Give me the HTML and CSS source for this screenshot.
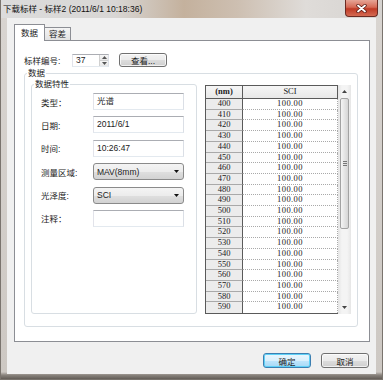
FILE: index.html
```html
<!DOCTYPE html>
<html lang="zh-CN">
<head>
  <meta charset="UTF-8">
  <title>下载标样</title>
  <link rel="stylesheet" href="styles.css">
</head>
<body>
  <div class="window">
    <div class="titlebar">
      <span class="title">下载标样 - 标样2 (2011/6/1 10:18:36)</span>
      <span class="close">
        <svg width="11" height="9" viewBox="0 0 11 9">
          <path d="M2 1.5 L9 7.5 M9 1.5 L2 7.5" stroke="#5a1a12" stroke-width="3.4" stroke-linecap="round"/>
          <path d="M2 1.5 L9 7.5 M9 1.5 L2 7.5" stroke="#ffffff" stroke-width="1.8" stroke-linecap="round"/>
        </svg>
      </span>
    </div>

    <div class="client">
      <div class="tabs">
        <div class="tab active">数据</div>
        <div class="tab">容差</div>
      </div>

      <div class="panel">
        <div class="id-row">
          <span class="id-label">标样编号:</span>
          <div class="spin">
            <span class="spin-value">37</span>
            <div class="spin-btns">
              <span class="spin-up"><svg width="5" height="3" viewBox="0 0 5 3"><path d="M0 3 L2.5 0 L5 3 Z" fill="#555"/></svg></span>
              <span class="spin-down"><svg width="5" height="3" viewBox="0 0 5 3"><path d="M0 0 L2.5 3 L5 0 Z" fill="#555"/></svg></span>
            </div>
          </div>
          <button class="button view-button">查看...</button>
        </div>

        <fieldset class="group outer">
          <legend>数据</legend>
          <div class="group-body">
            <fieldset class="group inner">
              <legend>数据特性</legend>
              <div class="fields">
                <div class="field">
                  <span class="field-label">类型：</span>
                  <div class="text-box">光谱</div>
                </div>
                <div class="field">
                  <span class="field-label">日期:</span>
                  <div class="text-box">2011/6/1</div>
                </div>
                <div class="field">
                  <span class="field-label">时间:</span>
                  <div class="text-box">10:26:47</div>
                </div>
                <div class="field">
                  <span class="field-label">测量区域:</span>
                  <div class="select-box">
                    <span>MAV(8mm)</span>
                    <svg width="5" height="3" viewBox="0 0 5 3"><path d="M0 0 L5 0 L2.5 3 Z" fill="#111"/></svg>
                  </div>
                </div>
                <div class="field">
                  <span class="field-label">光泽度:</span>
                  <div class="select-box">
                    <span>SCI</span>
                    <svg width="5" height="3" viewBox="0 0 5 3"><path d="M0 0 L5 0 L2.5 3 Z" fill="#111"/></svg>
                  </div>
                </div>
                <div class="field">
                  <span class="field-label">注释：</span>
                  <div class="text-box"></div>
                </div>
              </div>
            </fieldset>

            <div class="grid">
              <div class="sheet">
                <div class="head">
                  <div class="key">(nm)</div>
                  <div class="val">SCI</div>
                </div>
                <div class="rows">
                  <div class="row"><div class="key">400</div><div class="val">100.00</div></div>
                  <div class="row"><div class="key">410</div><div class="val">100.00</div></div>
                  <div class="row"><div class="key">420</div><div class="val">100.00</div></div>
                  <div class="row"><div class="key">430</div><div class="val">100.00</div></div>
                  <div class="row"><div class="key">440</div><div class="val">100.00</div></div>
                  <div class="row"><div class="key">450</div><div class="val">100.00</div></div>
                  <div class="row"><div class="key">460</div><div class="val">100.00</div></div>
                  <div class="row"><div class="key">470</div><div class="val">100.00</div></div>
                  <div class="row"><div class="key">480</div><div class="val">100.00</div></div>
                  <div class="row"><div class="key">490</div><div class="val">100.00</div></div>
                  <div class="row"><div class="key">500</div><div class="val">100.00</div></div>
                  <div class="row"><div class="key">510</div><div class="val">100.00</div></div>
                  <div class="row"><div class="key">520</div><div class="val">100.00</div></div>
                  <div class="row"><div class="key">530</div><div class="val">100.00</div></div>
                  <div class="row"><div class="key">540</div><div class="val">100.00</div></div>
                  <div class="row"><div class="key">550</div><div class="val">100.00</div></div>
                  <div class="row"><div class="key">560</div><div class="val">100.00</div></div>
                  <div class="row"><div class="key">570</div><div class="val">100.00</div></div>
                  <div class="row"><div class="key">580</div><div class="val">100.00</div></div>
                  <div class="row"><div class="key">590</div><div class="val">100.00</div></div>
                </div>
              </div>
              <div class="scrollbar">
                <div class="arrow"><svg width="5" height="3" viewBox="0 0 5 3"><path d="M0 3 L2.5 0 L5 3 Z" fill="#444"/></svg></div>
                <div class="thumb"><span class="grip"></span></div>
                <div class="track"></div>
                <div class="arrow"><svg width="5" height="3" viewBox="0 0 5 3"><path d="M0 0 L2.5 3 L5 0 Z" fill="#444"/></svg></div>
              </div>
            </div>
          </div>
        </fieldset>
      </div>

      <div class="actions">
        <button class="button default">确定</button>
        <button class="button">取消</button>
      </div>
    </div>
  </div>
</body>
</html>
```

FILE: styles.css
```css
* {
  box-sizing: border-box;
}

body {
  margin: 0;
  font-family: "Liberation Sans", "Noto Sans CJK SC", sans-serif;
  font-size: 8.5px;
  color: #1b1b1b;
  background: #cfcac5;
}

.window {
  width: 383px;
  height: 380px;
  display: flex;
  flex-direction: column;
  border: 1px solid #7a746e;
  border-top: none;
  background: linear-gradient(to bottom, #d9d5d1 0, #cdc8c3 372px, #8a847e 375px, #635d57 379px);
}

/* title bar */
.titlebar {
  height: 18px;
  display: flex;
  align-items: flex-start;
  padding: 0 4px 0 2px;
  background: linear-gradient(to right, #dcdcdc 0, #d8d6d4 30%, #c4b19d 48%, #cdbfb1 62%, #dfdcd9 80%, #d6d3d0 100%);
}

.title {
  line-height: 18px;
  font-size: 8.5px;
  color: #111;
  white-space: nowrap;
}

.close {
  margin-left: auto;
  width: 33px;
  height: 17px;
  display: flex;
  align-items: center;
  justify-content: center;
  border: 1px solid #6b2a22;
  border-top: none;
  border-radius: 0 0 4px 4px;
  background: linear-gradient(to bottom, #e6a596 0, #d66a55 45%, #bf3a25 55%, #d46a52 100%);
}

/* client area */
.client {
  flex: 1;
  margin: 0 6px 5px 6px;
  padding: 6px 6px 0 7px;
  background: #f0f0f0;
  display: flex;
  flex-direction: column;
}

.tabs {
  height: 16px;
  display: flex;
  align-items: flex-end;
}

.tab {
  height: 13px;
  width: 27px;
  margin-left: -1px;
  line-height: 12px;
  text-align: center;
  border: 1px solid #8c8e94;
  border-bottom: none;
  background: linear-gradient(to bottom, #f4f4f4, #e2e2e2);
}

.tab.active {
  width: 31px;
  height: 17px;
  margin-left: 0;
  margin-bottom: -1px;
  line-height: 16px;
  background: #fff;
  position: relative;
  z-index: 1;
}

.panel {
  height: 302px;
  padding: 0 0 0 9px;
  border: 1px solid #8c8e94;
  background: #fff;
}

/* id row */
.id-row {
  margin-top: 12px;
  height: 14px;
  display: flex;
  align-items: center;
}

.id-label {
  width: 48px;
}

.spin {
  width: 37px;
  height: 13px;
  display: flex;
  border: 1px solid #abadb3;
  border-color: #abadb3 #dbdfe6 #e3e9ef #e2e3ea;
  background: #fff;
}

.spin-value {
  flex: 1;
  padding-left: 3px;
  line-height: 11px;
}

.spin-btns {
  width: 9px;
  display: flex;
  flex-direction: column;
  border-left: 1px solid #d0d0d0;
}

.spin-btns span {
  flex: 1;
  display: flex;
  align-items: center;
  justify-content: center;
  background: linear-gradient(to bottom, #f7f7f7, #e6e6e6);
}

.spin-up {
  border-bottom: 1px solid #d0d0d0;
}

.button {
  height: 15px;
  width: 48px;
  padding: 0;
  font-family: inherit;
  font-size: 8.5px;
  color: #1b1b1b;
  border: 1px solid #707070;
  border-radius: 3px;
  background: linear-gradient(to bottom, #f3f3f3 0, #ebebeb 50%, #dddddd 51%, #cfcfcf 100%);
  box-shadow: inset 0 0 0 1px rgba(255, 255, 255, 0.7);
}

.view-button {
  margin-left: 10px;
  height: 14px;
}

.button.default {
  border-color: #3c7fb1;
  background: linear-gradient(to bottom, #eaf6fd 0, #d9f0fc 50%, #bee6fd 51%, #a7d9f5 100%);
  box-shadow: inset 0 0 0 1px #5ed1f7;
}

/* group boxes */
.group {
  margin: 0;
  padding: 0;
  border: 1px solid #d8dee3;
  border-radius: 3px;
}

.group legend {
  margin-left: 2px;
  padding: 0 1px;
  line-height: 11px;
}

.outer {
  width: 334px;
  margin-top: 1px;
}

.group-body {
  display: flex;
  gap: 8px;
  padding: 0 6px 12px 6px;
}

.inner {
  width: 166px;
}

.fields {
  display: flex;
  flex-direction: column;
  gap: 6.4px;
  padding: 3px 11px 0 9px;
}

.field {
  height: 17px;
  display: flex;
  align-items: center;
}

.field-label {
  width: 52px;
}

.text-box {
  width: 91px;
  height: 17px;
  padding-left: 3px;
  line-height: 15px;
  border: 1px solid #abadb3;
  border-color: #abadb3 #dbdfe6 #e3e9ef #e2e3ea;
}

.select-box {
  width: 91px;
  height: 17px;
  display: flex;
  align-items: center;
  justify-content: space-between;
  padding: 0 4px 0 3px;
  border: 1px solid #8a8a8a;
  border-radius: 3px;
  background: linear-gradient(to bottom, #f4f4f4 0, #ececec 50%, #dfdfdf 51%, #d2d2d2 100%);
}

/* data grid */
.grid {
  margin-top: 6px;
  width: 146px;
  height: 229px;
  display: flex;
}

.sheet {
  width: 133px;
  display: flex;
  flex-direction: column;
  border: 1px solid #5a5a5a;
  border-right: none;
  font-family: "Liberation Serif", "Noto Sans CJK SC", serif;
  font-size: 8.5px;
}

.head {
  height: 13px;
  display: flex;
  border-bottom: 1px solid #5a5a5a;
  background: linear-gradient(to bottom, #f6f6f6, #e8e8e8);
}

.head .key {
  font-weight: bold;
}

.head .val {
  border-right: 1px solid #5a5a5a;
}

.key {
  width: 37px;
  text-align: center;
  line-height: 11px;
  border-right: 1px solid #5a5a5a;
}

.val {
  flex: 1;
  text-align: center;
  line-height: 11px;
}

.rows {
  flex: 1;
  display: flex;
  flex-direction: column;
}

.row {
  flex: 1;
  display: flex;
}

.row .key {
  background: #ececec;
  border-bottom: 1px solid #a9a9a9;
  line-height: 9px;
}

.row .val {
  border-bottom: 1px dotted #a9a9a9;
  border-right: 1px dotted #a9a9a9;
  line-height: 9px;
  letter-spacing: 0.4px;
}

.row:last-child .key,
.row:last-child .val {
  border-bottom: none;
}

.scrollbar {
  width: 13px;
  display: flex;
  flex-direction: column;
  background: linear-gradient(to right, #e4e4e4, #f4f4f4 30%, #f4f4f4 70%, #e6e6e6);
}

.arrow {
  height: 13px;
  display: flex;
  align-items: center;
  justify-content: center;
}

.thumb {
  height: 131px;
  margin: 0 2px;
  display: flex;
  align-items: center;
  justify-content: center;
  border: 1px solid #a3a3a3;
  border-radius: 2px;
  background: linear-gradient(to right, #f5f5f5, #e5e5e5 50%, #d6d6d6);
}

.grip {
  width: 4px;
  height: 5px;
  border-top: 1px solid #777;
  border-bottom: 1px solid #777;
  background: linear-gradient(to bottom, transparent 1px, #777 1px, #777 2px, transparent 2px);
}

.track {
  flex: 1;
}

/* bottom buttons */
.actions {
  display: flex;
  justify-content: flex-end;
  gap: 10px;
  padding: 11px 1px 0 0;
}
```
